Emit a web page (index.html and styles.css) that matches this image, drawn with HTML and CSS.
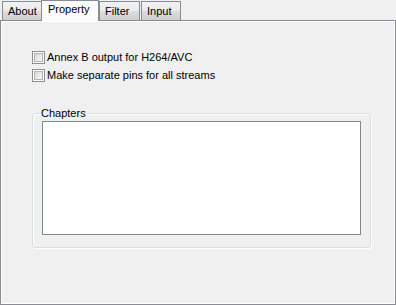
FILE: index.html
```html
<!DOCTYPE html>
<html>
<head>
<meta charset="utf-8">
<link rel="stylesheet" href="styles.css">
</head>
<body>
<div class="tabs">
  <div class="tab tab-about">About</div>
  <div class="tab tab-property active">Property</div>
  <div class="tab tab-filter">Filter</div>
  <div class="tab tab-input">Input</div>
</div>
<div class="panel">
  <div class="checks">
    <label class="check"><span class="box"><span class="box-inner"></span></span><span class="check-text">Annex B output for H264/AVC</span></label>
    <label class="check"><span class="box"><span class="box-inner"></span></span><span class="check-text">Make separate pins for all streams</span></label>
  </div>
  <fieldset class="group">
    <legend class="group-title">Chapters</legend>
    <div class="listbox"></div>
  </fieldset>
</div>
</body>
</html>
```
FILE: styles.css
```css
html, body {
  margin: 0;
  padding: 0;
}
body {
  width: 396px;
  height: 305px;
  background: #f0f0f0;
  font-family: "Liberation Sans", Arial, sans-serif;
  font-size: 11px;
  color: #000;
  overflow: hidden;
}
.tabs {
  display: flex;
  align-items: flex-end;
  height: 21px;
  padding-left: 2px;
  position: relative;
  z-index: 2;
}
.tab {
  box-sizing: border-box;
  height: 19px;
  border: 1px solid #898c95;
  border-bottom: none;
  background: linear-gradient(#f2f2f2 0%, #ebebeb 50%, #dddddd 51%, #cfcfcf 100%);
  padding: 3px 0 0 5px;
  line-height: 13px;
  margin-bottom: 1px;
}
.tab-about { width: 40px; }
.tab-property { width: 58px; }
.tab-filter { width: 41px; }
.tab-input { width: 40px; margin-left: 1px; }
.tab.active {
  height: 21px;
  margin-bottom: 0;
  background: #fcfcfe;
  border-color: #898c95;
  padding: 2px 0 0 6px;
  margin-left: -1px;
}
.panel {
  box-sizing: border-box;
  margin-top: -1px;
  width: 396px;
  height: 285px;
  border: 1px solid #898c95;
  box-shadow: inset 1px 1px 0 #fff, inset -1px -1px 0 #fff;
  padding: 30px 25px 0 31px;
}
.checks {
  display: flex;
  flex-direction: column;
  gap: 5px;
}
.check {
  display: flex;
  align-items: center;
  gap: 2px;
  height: 13px;
  line-height: 13px;
}
.box {
  box-sizing: border-box;
  width: 13px;
  height: 13px;
  border: 1px solid #8e8f8f;
  background: #fff;
  padding: 1px;
  flex: none;
}
.box-inner {
  display: block;
  box-sizing: border-box;
  width: 9px;
  height: 9px;
  border: 1px solid #afb4b9;
  background: linear-gradient(135deg, #d9d9d9, #f7f7f7);
}
.group {
  box-sizing: border-box;
  width: 339px;
  margin: 25px 0 0 0;
  padding: 0 9px 12px 9px;
  border: 1px solid #d5dfe5;
  border-radius: 3px;
  box-shadow: inset 1px 1px 0 #fff, 1px 1px 0 #fff;
}
.group-title {
  padding: 0 1px;
  margin-left: -2px;
  line-height: 13px;
}
.listbox {
  box-sizing: border-box;
  width: 319px;
  height: 114px;
  margin-top: 1px;
  border: 1px solid #828790;
  background: #fff;
}
```
